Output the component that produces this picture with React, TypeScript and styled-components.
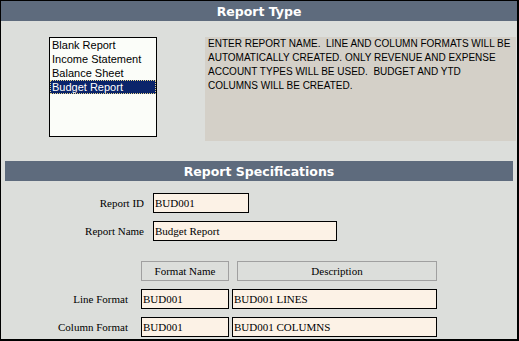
import React from 'react';
import styled, { createGlobalStyle } from 'styled-components';

const Global = createGlobalStyle`
  html, body { margin: 0; padding: 0; background: #dcdedb; }
  * { box-sizing: border-box; }
`;

const Frame = styled.div`
  width: 519px;
  height: 341px;
  border-style: solid;
  border-color: #000;
  border-width: 1px 2px 2px 1px;
  background: #dcdedb;
  display: flex;
  flex-direction: column;
  overflow: hidden;
`;

const SectionHeader = styled.div<{ $inset?: number; $top?: number }>`
  height: 20px;
  margin: ${p => p.$top ?? 0}px ${p => p.$inset ?? 0}px 0;
  background: #5e6b7d;
  color: #fff;
  font: bold 12.5px "DejaVu Sans", sans-serif;
  display: flex;
  align-items: center;
  justify-content: center;
`;

const TypeRow = styled.div`
  display: flex;
  align-items: flex-start;
  gap: 48px;
  padding: 16px 0 0 48px;
`;

const ListBox = styled.div`
  width: 108px;
  height: 100px;
  border: 1px solid #000;
  background: #fbfdf9;
  font: 11px "Liberation Sans", Arial, sans-serif;
  color: #000;
`;

const ListItem = styled.div<{ $selected?: boolean }>`
  height: 14px;
  line-height: 14px;
  padding-left: 2px;
  white-space: nowrap;
  background: ${p => (p.$selected ? '#0a246a' : 'transparent')};
  color: ${p => (p.$selected ? '#fff' : '#000')};
  outline: ${p => (p.$selected ? '1px dotted #e6d48c' : 'none')};
  outline-offset: -1px;
`;

const InfoPanel = styled.div`
  width: 311px;
  height: 104px;
  background: #d4d0c8;
  padding: 0 3px;
  font: 10px "Liberation Sans", Arial, sans-serif;
  line-height: 14px;
  color: #000;
`;

const InfoLine = styled.div`
  white-space: pre;
`;

const Form = styled.div`
  display: flex;
  flex-direction: column;
  gap: 8px;
  margin-top: 12px;
`;

const FieldRow = styled.div`
  display: grid;
  grid-template-columns: 143px auto;
  column-gap: 9px;
  align-items: center;
  height: 20px;
`;

const Label = styled.div`
  text-align: right;
  font: 11px "Liberation Serif", "Times New Roman", serif;
  color: #000;
  white-space: nowrap;
`;

const TextBox = styled.input<{ $w: number }>`
  width: ${p => p.$w}px;
  height: 20px;
  border: 1px solid #000;
  background: #fcf2e6;
  font: 11px "Liberation Serif", "Times New Roman", serif;
  color: #000;
  padding: 0 0 0 1px;
  margin: 0;
  outline: none;
`;

const FormatGrid = styled.div`
  display: grid;
  grid-template-columns: 140px 91px 205px;
  grid-auto-rows: 20px;
  row-gap: 8px;
  align-items: center;
  margin-top: 20px;
`;

const GridLabel = styled(Label)`
  padding-right: 13px;
`;

const ColHead = styled.div<{ $w: number; $shift?: number }>`
  width: ${p => p.$w}px;
  height: 20px;
  margin-left: ${p => p.$shift ?? 0}px;
  border: 1px solid #a0a0a0;
  display: flex;
  align-items: center;
  justify-content: center;
  font: 11px "Liberation Serif", "Times New Roman", serif;
  color: #000;
`;

const reportTypes = ['Blank Report', 'Income Statement', 'Balance Sheet', 'Budget Report'];

const infoLines = [
  'ENTER REPORT NAME.  LINE AND COLUMN FORMATS WILL BE',
  'AUTOMATICALLY CREATED. ONLY REVENUE AND EXPENSE',
  'ACCOUNT TYPES WILL BE USED.  BUDGET AND YTD',
  'COLUMNS WILL BE CREATED.',
];

const formats = [
  { label: 'Line Format', name: 'BUD001', desc: 'BUD001 LINES' },
  { label: 'Column Format', name: 'BUD001', desc: 'BUD001 COLUMNS' },
];

export default function App() {
  return (
    <>
      <Global />
      <Frame>
        <SectionHeader>Report Type</SectionHeader>
        <TypeRow>
          <ListBox>
            {reportTypes.map(t => (
              <ListItem key={t} $selected={t === 'Budget Report'}>{t}</ListItem>
            ))}
          </ListBox>
          <InfoPanel>
            {infoLines.map((l, i) => (
              <InfoLine key={i}>{l}</InfoLine>
            ))}
          </InfoPanel>
        </TypeRow>
        <SectionHeader $inset={4} $top={20}>Report Specifications</SectionHeader>
        <Form>
          <FieldRow>
            <Label>Report ID</Label>
            <TextBox $w={96} readOnly value="BUD001" />
          </FieldRow>
          <FieldRow>
            <Label>Report Name</Label>
            <TextBox $w={184} readOnly value="Budget Report" />
          </FieldRow>
        </Form>
        <FormatGrid>
          <div />
          <ColHead $w={88}>Format Name</ColHead>
          <ColHead $w={200} $shift={5}>Description</ColHead>
          {formats.map(f => (
            <React.Fragment key={f.label}>
              <GridLabel>{f.label}</GridLabel>
              <TextBox $w={88} readOnly value={f.name} />
              <TextBox $w={205} readOnly value={f.desc} />
            </React.Fragment>
          ))}
        </FormatGrid>
      </Frame>
    </>
  );
}
